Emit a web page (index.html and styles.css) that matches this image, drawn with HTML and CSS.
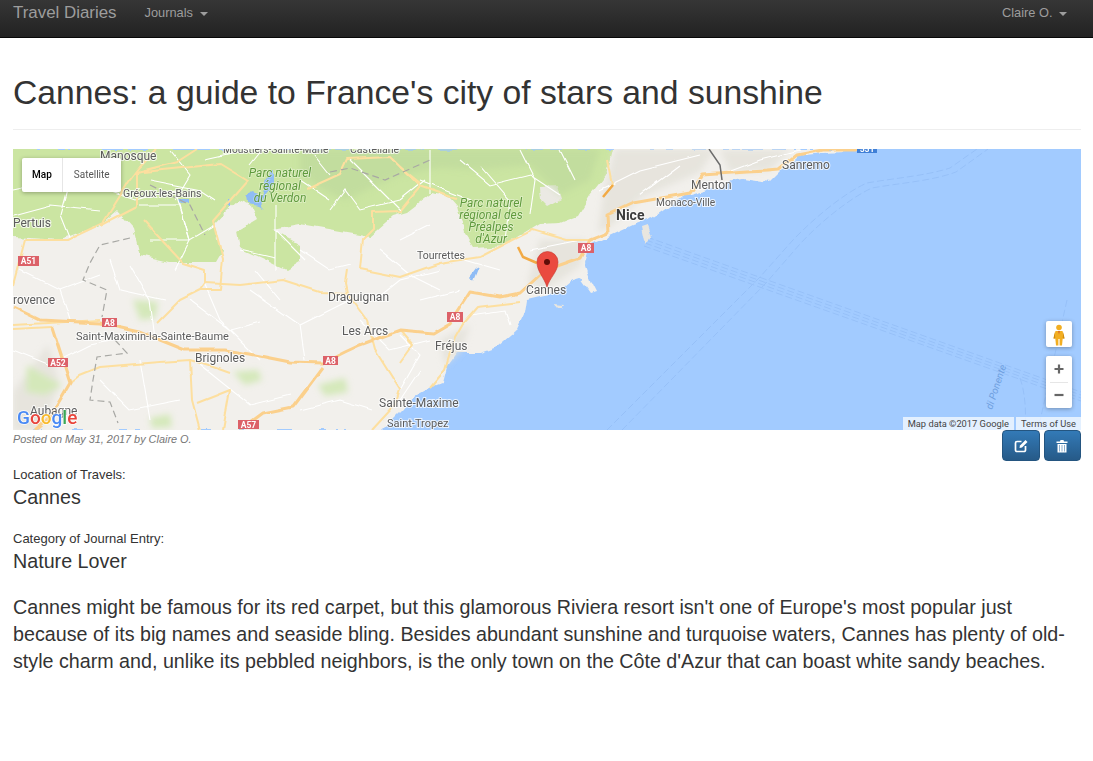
FILE: index.html
```html
<!DOCTYPE html>
<html lang="en">
<head>
<meta charset="utf-8">
<title>Cannes: a guide to France's city of stars and sunshine</title>
<link rel="stylesheet" href="styles.css">
</head>
<body>
<nav class="navbar">
  <div class="nav-left">
    <a class="brand">Travel Diaries</a>
    <a class="nav-link">Journals <span class="caret"></span></a>
  </div>
  <a class="nav-link">Claire O. <span class="caret"></span></a>
</nav>
<main class="page">
  <h1 class="title">Cannes: a guide to France's city of stars and sunshine</h1>
  <div class="map">
    <svg class="map-canvas" viewBox="13 149 1068 281" width="1068" height="281">
      <defs>
        <filter id="rough" x="-2%" y="-2%" width="104%" height="104%">
          <feTurbulence type="fractalNoise" baseFrequency=".07" numOctaves="3" seed="4" result="n"/>
          <feDisplacementMap in="SourceGraphic" in2="n" scale="7" xChannelSelector="R" yChannelSelector="G"/>
          <feGaussianBlur stdDeviation=".6"/>
        </filter>
        <filter id="wobble" x="-2%" y="-2%" width="104%" height="104%">
          <feTurbulence type="fractalNoise" baseFrequency=".05" numOctaves="2" seed="9" result="n"/>
          <feDisplacementMap in="SourceGraphic" in2="n" scale="4" xChannelSelector="R" yChannelSelector="G"/>
          <feGaussianBlur stdDeviation=".35"/>
        </filter>
        <filter id="soft" x="-20%" y="-20%" width="140%" height="140%">
          <feGaussianBlur stdDeviation="3"/>
        </filter>
      </defs>
      <rect class="sea" x="13" y="149" width="1068" height="281"/>
      <!-- shipping lanes -->
      <g class="lane">
        <path d="M647 237L1081 392"/><path d="M646 240L1081 395"/><path d="M645 243L1081 398"/><path d="M644 246L1081 401"/>
        <path d="M607 430L760 277L793 240C820 212 850 190 867 183C895 178 925 176 950 168L977 149"/>
        <path d="M622 430L766 283L800 244C826 216 856 195 872 188C900 183 932 181 956 172L988 149"/>
        <path d="M1067 300L1038 430"/><path d="M1020 378C1026 395 1026 415 1025 430"/>
      </g>
      <text class="sea-label" transform="translate(992 410) rotate(-72)">di Ponente</text>
      <!-- land -->
      <g filter="url(#rough)">
        <path class="land" d="M13 149L857 149L845 152L823 153L797 156L782 170L770 182L756 180L743 178L732 180L722 186L707 190L683 197L653 218L633 225L607 237L590 245L585 263L592 283L596 291L590 293L580 279L570 282L557 293L540 297L527 300L525 313L517 330L497 347L480 353L457 353L447 367L443 383L430 388L413 397L402 410L382 430L0 430L0 149Z"/>
        <path class="island" d="M642 226L648 224L652 236L646 245Z"/>
        <path class="island" d="M553 303L563 304L561 307L554 306Z"/>
        <path class="green" d="M0 149L612 149L606 175L590 195L578 215L560 222L540 223L517 237L507 245L473 247L463 232L457 205L450 197L433 192L407 212L393 216L370 236L300 224L273 229L300 245L300 262L287 270L262 258L240 248L237 232L257 220L250 205L238 200L225 212L213 225L222 250L215 262L170 262L140 255L133 228L117 210L100 225L60 240L0 236Z"/>
        <path class="patch" d="M540 187L557 186L561 200L548 207L541 200Z"/>
        <path class="lake" d="M247 197L252 192L262 195L269 172L274 170L274 183L264 195L260 205L263 208L258 205L248 203Z"/>
        <path class="lake" d="M178 199L189 199L189 203L182 204Z"/>
        <path class="lake" d="M228 199L231 199L231 207L228 206Z"/>
        <path class="lake" d="M476 268L480 266L474 281L470 276Z"/>
      </g>
      <g filter="url(#soft)">
        <path class="relief" d="M300 149L600 149L590 180L560 195L530 165L480 170L440 168L400 175L345 200L320 188L300 172Z"/>
        <path class="grey" d="M615 149L715 149L700 172L640 198L612 225L598 232L604 190Z"/>
        <path class="grey" d="M540 240L585 240L580 266L545 290L528 282Z"/>
        <path class="grey" d="M13 392L48 345L60 385L40 430L13 430Z"/>
        <path class="grey" d="M720 150L790 150L770 170L730 172Z"/>
        <path class="grey" d="M440 340L470 325L462 350L445 365Z"/>
        <path class="park" d="M133 300L158 302L155 318L140 320Z"/>
        <path class="park" d="M27 365L62 385L45 395L26 392Z"/>
        <path class="park" d="M233 372L258 370L262 380L245 385Z"/>
        <path class="park" d="M318 385L345 378L348 392L325 396Z"/>
        <path class="park" d="M150 418L170 414L172 427L152 428Z"/>
      </g>
      <!-- minor roads -->
      <g class="minor" filter="url(#wobble)">
        <path d="M13 190L70 178L135 200L175 190L190 240L175 270"/>
        <path d="M70 178L60 215L70 240M30 160L60 180M13 215L50 205L100 210"/>
        <path d="M140 205L180 205L190 240L215 225M150 240L190 240"/>
        <path d="M150 180L200 190L215 200M205 160L250 150M170 150L190 175L175 200"/>
        <path d="M275 205L275 230L305 260M275 230L275 270M240 250L275 258M250 165L262 150"/>
        <path d="M330 210L345 190L360 210L400 200L425 180M300 180L330 200M310 150L330 175"/>
        <path d="M350 160L380 190L400 210M430 150L430 195M480 165L510 200L505 240M420 180L470 200"/>
        <path d="M460 160L490 185L530 175L560 195M520 150L535 180L530 215M560 150L575 180"/>
        <path d="M20 270L60 290L100 275M60 290L70 320M13 350L50 365L90 345L115 340M110 260L120 290L165 300"/>
        <path d="M130 265L150 300L155 340M190 300L230 330L260 322M205 285L220 320L260 360M255 270L280 300"/>
        <path d="M250 290L300 325L350 300M300 325L305 360M360 320L390 350L430 340M300 250L330 270L350 265"/>
        <path d="M100 380L130 410L180 400M200 365L250 405L290 395M300 410L340 400L372 410M140 360L150 420"/>
        <path d="M375 300L400 280L440 270M420 300L460 290M400 390L420 355L400 335M465 260L500 270"/>
        <path d="M530 250L580 240M600 190L640 170L700 155M640 195L680 165M720 175L760 160L800 150"/>
        <path d="M400 240L430 225M380 250L410 275L440 290M470 315L505 310L510 325M420 370L400 400"/>
      </g>
      <!-- main roads -->
      <g class="road" filter="url(#wobble)">
        <path d="M157 149L140 167L130 180L103 223L67 240L25 240L13 285"/>
        <path d="M137 172L177 162L197 149M143 172L220 164L248 181L213 221L223 259L220 290L200 290"/>
        <path d="M143 220L183 263L205 270L205 283L200 290L180 300L157 323"/>
        <path d="M205 283L240 285L283 280L320 292L347 293L367 320"/>
        <path d="M347 270L345 283L347 293M13 329L52 327"/>
        <path d="M13 325L100 320M70 383L80 375L100 367L160 362L190 360L192 400L200 430M197 403L230 390L223 430M230 373L213 367L190 360"/>
        <path d="M100 226L137 207L137 172M307 189L340 174L347 159L390 157L420 186L457 199M420 187L400 211L373 212L373 229L363 239L360 269"/>
        <path d="M360 269L400 277L440 263L480 257L513 240L533 230L567 240L590 240M400 167L420 183M607 160L612 185"/>
        <path d="M520 302L477 307L463 323L455 337L445 370L430 388M400 363L413 345L400 330"/>
        <path d="M395 405L400 390L375 350L367 320M372 430L395 405"/>
      </g>
      <g class="highway" filter="url(#wobble)">
        <path d="M13 307L40 320L100 323L140 332L160 340L185 350L225 350L250 354L290 362L323 363L345 352L360 345L400 330L433 333L450 323L470 292L500 297L520 293L540 275L560 265L580 258L590 240L608 233L607 215L633 203L690 193L703 175L747 172L767 171L778 170L797 155L823 150L857 150"/>
        <path d="M323 367L293 407L263 413L240 430M52 327L70 383L50 417L35 430"/>
      </g>
      <path class="highway-strong" d="M603 197L613 185M518 247L523 257L537 263"/>
      <!-- borders -->
      <path class="border" d="M130 238L100 245L90 263L83 280L107 290L102 317M115 340L127 353L97 357L93 380L90 400L110 402L118 423M150 185L190 205L205 235M330 172L350 168L385 180L430 160"/>
      <path class="border-solid" d="M709 149L720 165L722 180"/>
      <!-- shields -->
      <g class="shield">
        <rect x="18" y="256" width="21" height="10"/><rect x="102" y="318" width="15" height="9"/>
        <rect x="48" y="358" width="20" height="9"/><rect x="323" y="356" width="15" height="9"/>
        <rect x="238" y="420" width="21" height="9"/><rect x="578" y="243" width="16" height="10"/>
        <rect x="447" y="312" width="16" height="10"/>
      </g>
      <rect class="shield-blue" x="857" y="143" width="20" height="10"/>
      <g class="shield-text">
        <text x="28.500" y="264">A51</text><text x="109.500" y="325.500">A8</text>
        <text x="58" y="365.500">A52</text><text x="330.500" y="363.500">A8</text>
        <text x="248.500" y="427.500">A57</text><text x="586" y="251">A8</text>
        <text x="455" y="320">A8</text><text x="867" y="152">551</text>
      </g>
      <!-- labels -->
      <g class="place">
        <text class="m" x="100" y="160">Manosque</text>
        <text class="t" x="223" y="153">Moustiers-Sainte-Marie</text>
        <text class="s" x="350" y="153">Castellane</text>
        <text class="s" x="123" y="197">Gréoux-les-Bains</text>
        <text class="m" x="13" y="227">Pertuis</text>
        <text class="s" x="417" y="259">Tourrettes</text>
        <text class="nice" x="616" y="220">Nice</text>
        <text class="m" x="691" y="189">Menton</text>
        <text class="t" x="656" y="206">Monaco-Ville</text>
        <text class="m" x="782" y="169">Sanremo</text>
        <text class="m" x="526" y="294">Cannes</text>
        <text class="m" x="435" y="350">Fréjus</text>
        <text class="m" x="328" y="301">Draguignan</text>
        <text class="m" x="342" y="335">Les Arcs</text>
        <text class="w" x="76" y="340">Saint-Maximin-la-Sainte-Baume</text>
        <text class="m" x="195" y="362">Brignoles</text>
        <text class="m" x="13" y="304">rovence</text>
        <text class="m" x="30" y="415">Aubagne</text>
        <text class="m" x="379" y="407">Sainte-Maxime</text>
        <text class="w" x="387" y="427">Saint-Tropez</text>
      </g>
      <g class="park-label">
        <text x="280" y="177">Parc naturel</text><text x="280" y="190">régional</text><text x="280" y="202">du Verdon</text>
        <text x="491" y="207">Parc naturel</text><text x="491" y="219">régional des</text><text x="491" y="231">Préalpes</text><text x="491" y="243">d'Azur</text>
      </g>
      <!-- marker -->
      <path class="pin" d="M547 287C544 277 537 272 537 262A10.500 10.500 0 0 1 558 262C558 272 550 277 547 287Z"/>
      <circle class="pin-dot" cx="547" cy="262" r="3"/>
      <!-- logo -->
      <text class="logo" x="17" y="424"><tspan class="g-b">G</tspan><tspan class="g-r">o</tspan><tspan class="g-y">o</tspan><tspan class="g-b">g</tspan><tspan class="g-g">l</tspan><tspan class="g-r">e</tspan></text>
    </svg>
    <div class="map-types">
      <span class="map-type active">Map</span>
      <span class="map-type">Satellite</span>
    </div>
    <div class="pegman">
      <svg viewBox="0 0 26 26" width="26" height="26">
        <circle cx="13" cy="6.500" r="2.800" fill="#f2ae21"/>
        <path d="M9.500 10H16.500L18.500 17.500H16.700L16 24.500H13.600V18H12.400V24.500H10L9.300 17.500H7.500Z" fill="#f2ae21"/>
        <path d="M8.700 11L7.500 17.500H9.300ZM17.300 11L18.500 17.500H16.700Z" fill="#d18c10"/>
        <path d="M12 10L13 13.500L14 10Z" fill="#d9662f"/>
      </svg>
    </div>
    <div class="zoom-control">
      <span class="zoom-btn">
        <svg viewBox="0 0 12 12" width="12" height="12"><path d="M1.500 6H10.500M6 1.500V10.500" class="zoom-glyph"/></svg>
      </span>
      <span class="zoom-btn">
        <svg viewBox="0 0 12 12" width="12" height="12"><path d="M1.500 6H10.500" class="zoom-glyph"/></svg>
      </span>
    </div>
    <div class="attribution">
      <span class="attr-item">Map data ©2017 Google</span>
      <span class="attr-item">Terms of Use</span>
    </div>
  </div>
  <div class="meta-row">
    <em class="posted">Posted on May 31, 2017 by Claire O.</em>
    <div class="actions">
      <button class="btn" type="button" aria-label="Edit">
        <svg viewBox="0 0 14 14" width="14" height="14"><path d="M7.500 2.500H3A1.500 1.500 0 0 0 1.500 4V11A1.500 1.500 0 0 0 3 12.500H10A1.500 1.500 0 0 0 11.500 11V7" fill="none" stroke="#fff" stroke-width="1.700"/><path d="M5.500 9L6 6.500L11.500 1L13.500 3L8 8.500Z" fill="#fff"/></svg>
      </button>
      <button class="btn" type="button" aria-label="Delete">
        <svg viewBox="0 0 14 14" width="14" height="14"><path d="M1.500 2.500H5L5.500 1H8.500L9 2.500H12.500V4H1.500Z" fill="#fff"/><path d="M2.500 5H11.500V13.500H2.500Z" fill="#fff"/><path d="M4.500 6V12.500M7 6V12.500M9.500 6V12.500" stroke="#8fb0cf" stroke-width="1"/></svg>
      </button>
    </div>
  </div>
  <section class="field">
    <div class="field-label">Location of Travels:</div>
    <div class="field-value">Cannes</div>
  </section>
  <section class="field">
    <div class="field-label">Category of Journal Entry:</div>
    <div class="field-value">Nature Lover</div>
  </section>
  <p class="body-text">Cannes might be famous for its red carpet, but this glamorous Riviera resort isn't one of Europe's most popular just because of its big names and seaside bling. Besides abundant sunshine and turquoise waters, Cannes has plenty of old-style charm and, unlike its pebbled neighbors, is the only town on the Côte d'Azur that can boast white sandy beaches.</p>
</main>
</body>
</html>
```
FILE: styles.css
```css
* { box-sizing: border-box; }
html, body { margin: 0; padding: 0; }
body {
  background: #fff;
  color: #333;
  font-family: "Liberation Sans", Arial, sans-serif;
  font-size: 14px;
}
.navbar {
  display: flex;
  justify-content: space-between;
  align-items: flex-start;
  height: 38px;
  padding: 0 26px 0 13px;
  background: linear-gradient(to bottom, #363636, #222);
  border-bottom: 1px solid #080808;
  color: #9d9d9d;
}
.nav-left { display: flex; align-items: flex-start; gap: 28px; }
.brand { font-size: 16.900px; line-height: 25px; }
.nav-link { font-size: 12.800px; line-height: 25px; }
.caret {
  display: inline-block;
  width: 0;
  height: 0;
  margin-left: 3px;
  vertical-align: middle;
  border-top: 4px solid #9d9d9d;
  border-left: 4px solid transparent;
  border-right: 4px solid transparent;
}
.page { padding: 0 12px 0 13px; }
.title {
  margin: 0 0 19px;
  height: 92px;
  padding-top: 34px;
  border-bottom: 1px solid #eee;
  font-size: 33.700px;
  font-weight: 400;
  line-height: 40px;
  color: #333;
}
.map { position: relative; height: 281px; overflow: hidden; }
.map-canvas { display: block; }
.sea { fill: #a2cbff; }
.land { fill: #f2f0ec; }
.island { fill: #e9e6df; }
.green { fill: #cbe5a2; }
.relief { fill: #bcd79a; opacity: .55; }
.patch { fill: #ebe9e3; }
.grey { fill: #e4e1d9; opacity: .8; }
.park { fill: #d4e8ba; }
.lake { fill: #8fbcf5; }
.lane { fill: none; stroke: #8fb9f3; stroke-width: 1; stroke-dasharray: 7 3; opacity: .6; }
.minor { fill: none; stroke: #fff; stroke-width: 1.100; }
.road { fill: none; stroke: #fddf9f; stroke-width: 2; stroke-linejoin: round; }
.highway { fill: none; stroke: #fbd08c; stroke-width: 3; stroke-linejoin: round; }
.highway-strong { fill: none; stroke: #f2aa45; stroke-width: 2.500; }
.border { fill: none; stroke: #a8a8a4; stroke-width: 1.200; stroke-dasharray: 7 4; }
.border-solid { fill: none; stroke: #6c6c6c; stroke-width: 1.500; }
.shield { fill: #dc6168; }
.shield-blue { fill: #3f7fd6; }
.shield-text { fill: #fff; font: 700 8.500px "Roboto", sans-serif; text-anchor: middle; }
.place text {
  fill: #5c5c5c;
  font-family: "Roboto", sans-serif;
  paint-order: stroke;
  stroke: rgba(255, 255, 255, .75);
  stroke-width: 2px;
}
.place .m { font-size: 12px; }
.place .s { font-size: 10.500px; }
.place .t { font-size: 10.200px; }
.place .w { font-size: 11px; }
.place .nice { font-size: 14px; font-weight: 700; fill: #3d3d3d; }
.park-label text {
  fill: #5f9a3c;
  font: italic 12px "Roboto", sans-serif;
  text-anchor: middle;
  paint-order: stroke;
  stroke: rgba(255, 255, 255, .4);
  stroke-width: 1.500px;
}
.sea-label { fill: #6f9fe0; font: italic 10px "Roboto", sans-serif; }
.pin { fill: #ea4a3f; stroke: #c5352b; stroke-width: .6; }
.pin-dot { fill: #5d0d08; }
.logo {
  font: 500 19px "Roboto", sans-serif;
  paint-order: stroke;
  stroke: rgba(255, 255, 255, .85);
  stroke-width: 1.500px;
}
.g-b { fill: #4a8af4; }
.g-r { fill: #e8453c; }
.g-y { fill: #f9bb2d; }
.g-g { fill: #3aa757; }
.map-types {
  position: absolute;
  left: 9px;
  top: 9px;
  display: flex;
  height: 34px;
  background: #fff;
  border-radius: 2px;
  box-shadow: 0 1px 4px rgba(0, 0, 0, .3);
  font: 10px/34px "Roboto", sans-serif;
  color: #565656;
}
.map-type { padding: 0 11px; border-left: 1px solid #e6e6e6; }
.map-type.active { padding: 0 10px; border-left: 0; color: #000; font-weight: 500; }
.pegman {
  position: absolute;
  left: 1033px;
  top: 172px;
  width: 26px;
  height: 26px;
  background: #fff;
  border-radius: 2px;
  box-shadow: 0 1px 4px rgba(0, 0, 0, .3);
}
.pegman svg { display: block; }
.zoom-control {
  position: absolute;
  left: 1033px;
  top: 207px;
  display: flex;
  flex-direction: column;
  width: 26px;
  height: 52px;
  padding: 0 4px;
  background: #fff;
  border-radius: 2px;
  box-shadow: 0 1px 4px rgba(0, 0, 0, .3);
}
.zoom-btn { flex: 1; display: flex; align-items: center; justify-content: center; }
.zoom-btn + .zoom-btn { border-top: 1px solid #e6e6e6; }
.zoom-glyph { fill: none; stroke: #666; stroke-width: 2.200; }
.attribution {
  position: absolute;
  right: 0;
  bottom: 0;
  display: flex;
  gap: 2px;
  font: 9.300px/13px "Roboto", sans-serif;
  color: #444;
}
.attr-item { padding: 0 5px; background: rgba(255, 255, 255, .7); }
.meta-row { display: flex; justify-content: space-between; align-items: flex-start; height: 31px; }
.posted { font-size: 10.900px; line-height: 18px; color: #777; }
.actions { display: flex; gap: 4px; }
.btn {
  display: flex;
  align-items: center;
  justify-content: center;
  width: 37.500px;
  height: 31px;
  padding: 0;
  background: linear-gradient(to bottom, #337ab7, #265a88);
  border: 1px solid #245580;
  border-radius: 4px;
}
.field { margin-bottom: 14px; }
.field-label { font-size: 13px; line-height: 17px; padding-top: 5px; }
.field-value { font-size: 19.700px; line-height: 27px; padding-top: 1px; }
.body-text { margin: 19px 0 0; font-size: 19.700px; line-height: 27px; }
```
